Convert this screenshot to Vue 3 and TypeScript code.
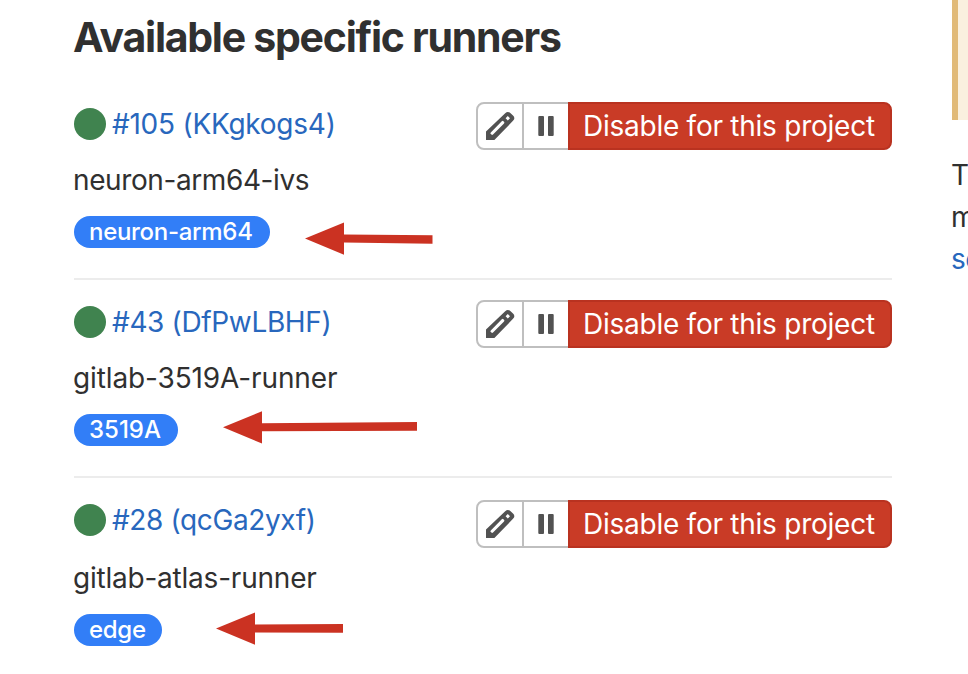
<script setup lang="ts">
interface Runner {
  id: string
  token: string
  key: string
  name: string
  tag: string
  tip: [number, number]
  tail: [number, number]
}

const runners: Runner[] = [
  { id: '105', token: 'KKgkogs4', key: 'a', name: 'neuron-arm64-ivs', tag: 'neuron-arm64', tip: [305, 238.5], tail: [432.5, 239.5] },
  { id: '43', token: 'DfPwLBHF', key: 'b', name: 'gitlab-3519A-runner', tag: '3519A', tip: [223, 427.2], tail: [417, 426.4] },
  { id: '28', token: 'qcGa2yxf', key: 'c', name: 'gitlab-atlas-runner', tag: 'edge', tip: [216, 628.5], tail: [343, 628.4] },
]

function arrowPoints({ tip: [x, y], tail: [tx, ty] }: Runner): string {
  const neck = x + 39
  return [
    [x, y], [neck, y - 16], [neck, y - 4], [tx, ty - 4.3],
    [tx, ty + 4.3], [neck, y + 4], [neck, y + 16.3],
  ].map(p => p.join(',')).join(' ')
}
</script>

<template>
  <div class="page">
    <main class="runners">
      <h4 class="title"><span>Available specific runners</span></h4>
      <ul class="list">
        <li v-for="r in runners" :key="r.id" class="runner" :class="'runner-' + r.key">
          <div class="info">
            <div class="heading">
              <span class="status"></span>
              <a class="link">#{{ r.id }} ({{ r.token }})</a>
            </div>
            <div class="name"><span>{{ r.name }}</span></div>
            <span class="tag"><span>{{ r.tag }}</span></span>
          </div>
          <div class="actions">
            <button class="btn edit" aria-label="Edit">
              <svg width="32" height="32" viewBox="0 0 16 16">
                <path
                  fill="#525252"
                  fill-rule="evenodd"
                  d="M1 15v-4.2L10.6 1.6a2 2 0 0 1 2.7 0l1.2 1.2a1.8 1.8 0 0 1 0 2.6L5.2 15zM3.4 11.2a.6.6 0 0 0 0 .8l.3.3a.6.6 0 0 0 .8 0l5.5-5.6a.6.6 0 0 0 0-.8l-.3-.3a.6.6 0 0 0-.8 0zM10.8 4.1 11.9 5.2l1.1-1.1-1.1-1.1z"
                />
              </svg>
            </button>
            <button class="btn pause" aria-label="Pause">
              <svg width="16" height="20" viewBox="0 0 16 20">
                <rect x="0.3" width="5.7" height="20" rx="1" fill="#525252" />
                <rect x="10" width="5.7" height="20" rx="1" fill="#525252" />
              </svg>
            </button>
            <button class="btn disable"><span>Disable for this project</span></button>
          </div>
        </li>
      </ul>
    </main>
    <aside class="side">
      <div class="notice"></div>
      <p class="help">T<br />m<br /><a>se</a></p>
    </aside>
    <svg class="arrows" width="968" height="674" viewBox="0 0 968 674">
      <polygon v-for="r in runners" :key="r.id" :points="arrowPoints(r)" fill="#cb3222" />
    </svg>
  </div>
</template>

<style>
body {
  margin: 0;
  background: #fff;
}
</style>

<style scoped>
.page {
  position: relative;
  display: flex;
  width: 968px;
  height: 674px;
  overflow: hidden;
  background: #fff;
  color: #303030;
  font-family: Inter, "Liberation Sans", sans-serif;
  font-size: 28px;
  line-height: 40px;
  white-space: nowrap;
}
.runners {
  flex: none;
  width: 818px;
  padding-left: 74px;
}
.title {
  margin: 0 0 0 -1px;
  padding-top: 17px;
  height: 63px;
  font-size: 41px;
  font-weight: 650;
  letter-spacing: -1.26px;
}
.list {
  margin: 0;
  padding: 0;
  list-style: none;
}
.runner {
  display: flex;
  justify-content: space-between;
  box-sizing: border-box;
  height: 198px;
  padding-top: 20px;
  border-bottom: 2px solid #ececec;
}
.runner:first-child {
  height: 200px;
  padding-top: 22px;
}
.runner:last-child {
  padding-top: 22px;
  border-bottom: 0;
}
.info {
  display: flex;
  flex-direction: column;
  align-items: flex-start;
}
.heading {
  display: flex;
  align-items: center;
  gap: 6px;
  height: 44px;
}
.runner-c .heading {
  height: 40px;
}
.status {
  width: 32px;
  height: 32px;
  border-radius: 50%;
  background: #40834f;
}
.runner-a .link { letter-spacing: -0.25px; }
.runner-b .link { letter-spacing: -0.35px; }
.runner-c .link { letter-spacing: -0.38px; }
.link,
.help a {
  color: #2867bd;
}
.name {
  margin-top: 14px;
  margin-left: -1px;
  height: 40px;
}
.runner-a .name { letter-spacing: -0.4px; }
.runner-b .name { letter-spacing: -0.12px; }
.runner-c .name { letter-spacing: -0.22px; }
.runner-c .name {
  margin-top: 18px;
}
.tag {
  display: flex;
  align-items: center;
  height: 32px;
  margin-top: 16px;
  padding: 0 15px;
  box-sizing: border-box;
  border-radius: 16px;
  background: #327ef7;
  color: #fff;
  font-size: 24px;
  font-weight: 500;
  line-height: 32px;
}
.runner-a .tag { width: 196px; letter-spacing: -0.3px; }
.runner-b .tag { width: 104px; }
.runner-c .tag { width: 88px; letter-spacing: -0.3px; }
.actions {
  display: flex;
  height: 48px;
}
.btn {
  display: flex;
  align-items: center;
  justify-content: center;
  box-sizing: border-box;
  height: 48px;
  margin: 0;
  padding: 0;
  border: 2px solid #bfbfbf;
  background: #fff;
  font: inherit;
}
.edit {
  width: 48px;
  border-radius: 8px 0 0 8px;
}
.pause {
  width: 46px;
  margin-left: -2px;
  border-right: 0;
}
.disable {
  width: 324px;
  justify-content: flex-start;
  padding-left: 13px;
  border-color: #b93220;
  border-radius: 0 8px 8px 0;
  background: #c93b26;
  color: #fff;
  letter-spacing: -0.25px;
}
.side {
  flex: none;
  width: 76px;
  padding-left: 60px;
}
.notice {
  height: 120px;
  box-sizing: border-box;
  border-left: 6px solid #e1ba78;
  background: #faf0df;
}
.help {
  margin: 34px 0 0 -1px;
  line-height: 42px;
}
.help a {
  letter-spacing: -0.5px;
}
.arrows {
  position: absolute;
  top: 0;
  left: 0;
  pointer-events: none;
}
</style>
